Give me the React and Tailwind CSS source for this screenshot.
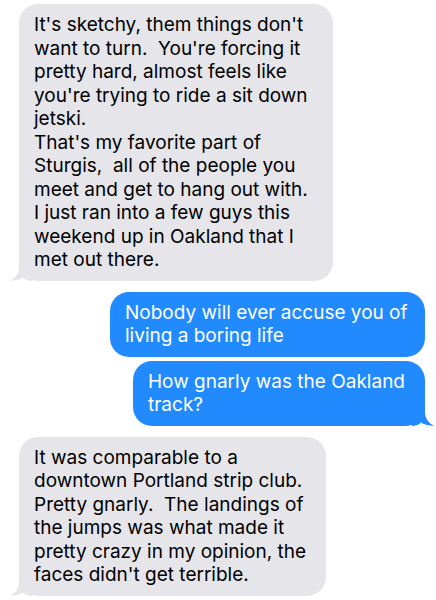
import React from 'react';

const messages = [
  {
    id: 1,
    from: 'them',
    width: 'w-[314px]',
    lines: [
      "It's sketchy, them things don't",
      "want to turn.  You're forcing it",
      'pretty hard, almost feels like',
      "you're trying to ride a sit down",
      'jetski.',
      "That's my favorite part of",
      'Sturgis,  all of the people you',
      'meet and get to hang out with.',
      'I just ran into a few guys this',
      'weekend up in Oakland that I',
      'met out there.',
    ],
    tail: true,
  },
  {
    id: 2,
    from: 'me',
    width: 'w-[315px]',
    lines: ['Nobody will ever accuse you of', 'living a boring life'],
  },
  {
    id: 3,
    from: 'me',
    width: 'w-[292px]',
    lines: ['How gnarly was the Oakland', 'track?'],
    tail: true,
  },
  {
    id: 4,
    from: 'them',
    width: 'w-[307px]',
    lines: [
      'It was comparable to a',
      'downtown Portland strip club.',
      'Pretty gnarly.  The landings of',
      'the jumps was what made it',
      'pretty crazy in my opinion, the',
      "faces didn't get terrible.",
    ],
    tail: true,
  },
];

function Tail({ side, color }) {
  if (side === 'left') {
    return (
      <svg width="22" height="22" viewBox="0 0 22 22" className="absolute -left-[9px] bottom-0">
        <path d="M9 0 L9 8 C9 14 6 19 0 21.6 C5 22 10 20.6 13 18.6 C15 20.6 18 22 22 22 L22 0 Z" fill={color} />
      </svg>
    );
  }
  return (
    <svg width="22" height="22" viewBox="0 0 22 22" className="absolute -right-[9px] bottom-0">
      <path d="M13 0 L13 8 C13 14 16 19 22 21.6 C17 22 12 20.6 9 18.6 C7 20.6 4 22 0 22 L0 0 Z" fill={color} />
    </svg>
  );
}

export default function App() {
  return (
    <div
      className="w-[436px] h-[600px] bg-white overflow-hidden flex flex-col pt-[4px] pl-[19px] pr-[11px]"
      style={{ fontFamily: 'Inter, "Liberation Sans", Arial, sans-serif' }}
    >
      {messages.map((m, i) => {
        const mine = m.from === 'me';
        const gap = i === 0 ? '' : messages[i - 1].from === m.from ? 'mt-[4px]' : 'mt-[11px]';
        return (
          <div key={m.id} className={`flex ${mine ? 'justify-end' : 'justify-start'} ${gap}`}>
            <div
              className={`relative ${m.width} rounded-[19px] px-[15px] py-[9px] text-[19px] leading-[23.5px] whitespace-nowrap ${
                mine ? 'bg-[#218aff] text-white' : 'bg-[#e5e5ea] text-black'
              }`}
            >
              {m.tail && <Tail side={mine ? 'right' : 'left'} color={mine ? '#218aff' : '#e5e5ea'} />}
              <div className="relative">
                {m.lines.map((line, j) => (
                  <div key={j} className="whitespace-pre">{line}</div>
                ))}
              </div>
            </div>
          </div>
        );
      })}
    </div>
  );
}
